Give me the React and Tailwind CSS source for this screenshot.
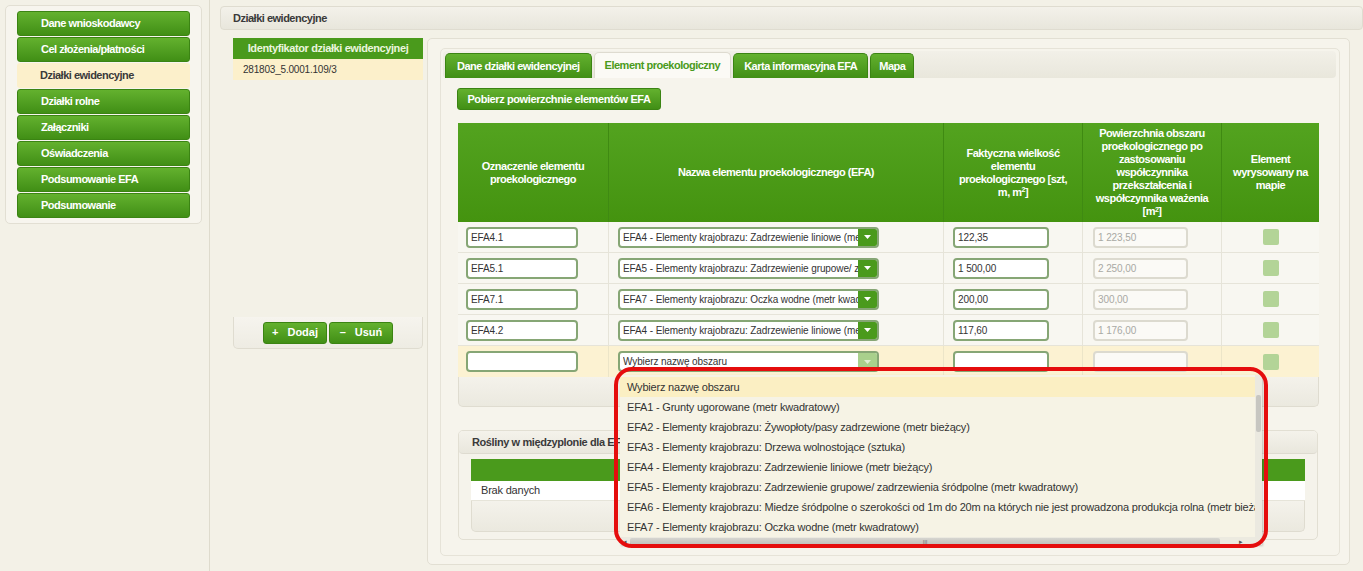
import React from 'react'

const menu = [
  'Dane wnioskodawcy',
  'Cel złożenia/płatności',
  'Działki ewidencyjne',
  'Działki rolne',
  'Załączniki',
  'Oświadczenia',
  'Podsumowanie EFA',
  'Podsumowanie',
]

const rows = [
  { id: 'EFA4.1', name: 'EFA4 - Elementy krajobrazu: Zadrzewienie liniowe (metr bieżący)', size: '122,35', area: '1 223,50' },
  { id: 'EFA5.1', name: 'EFA5 - Elementy krajobrazu: Zadrzewienie grupowe/ zadrzewienia śródpolne (metr kwadratowy)', size: '1 500,00', area: '2 250,00' },
  { id: 'EFA7.1', name: 'EFA7 - Elementy krajobrazu: Oczka wodne (metr kwadratowy)', size: '200,00', area: '300,00' },
  { id: 'EFA4.2', name: 'EFA4 - Elementy krajobrazu: Zadrzewienie liniowe (metr bieżący)', size: '117,60', area: '1 176,00' },
]

const options = [
  'Wybierz nazwę obszaru',
  'EFA1 - Grunty ugorowane (metr kwadratowy)',
  'EFA2 - Elementy krajobrazu: Żywopłoty/pasy zadrzewione (metr bieżący)',
  'EFA3 - Elementy krajobrazu: Drzewa wolnostojące (sztuka)',
  'EFA4 - Elementy krajobrazu: Zadrzewienie liniowe (metr bieżący)',
  'EFA5 - Elementy krajobrazu: Zadrzewienie grupowe/ zadrzewienia śródpolne (metr kwadratowy)',
  'EFA6 - Elementy krajobrazu: Miedze śródpolne o szerokości od 1m do 20m na których nie jest prowadzona produkcja rolna (metr bieżący)',
  'EFA7 - Elementy krajobrazu: Oczka wodne (metr kwadratowy)',
]

const green = 'bg-linear-to-b from-[#63b12e] to-[#418f15] border border-[#3b8413] text-white font-bold'
const cols = 'grid grid-cols-[151px_335px_139px_139px_97px]'

function Caret({ light }) {
  return (
    <svg width="7" height="4" viewBox="0 0 7 4">
      <path d="M0 0h7L3.5 4z" fill={light ? '#dfeed3' : '#fff'} />
    </svg>
  )
}

function Select({ value, light, open }) {
  return (
    <div className="relative ml-[9px] w-[261px] h-[21px]">
      <div className="flex h-full rounded-[4px] border-2 border-[#86a675] bg-white overflow-hidden">
        <div className="flex-1 min-w-0 pl-[3px] flex items-center whitespace-nowrap overflow-hidden text-[#333] text-[10px] tracking-[-0.1px]">
          <span className="block overflow-hidden">{value}</span>
        </div>
        <div className={`w-[19px] shrink-0 flex items-center justify-center ${light ? 'bg-[#a9d08c]' : 'bg-[#4a9a1c]'}`}>
          <Caret light={light} />
        </div>
      </div>
      {open && (
        <div className="absolute left-[2px] top-[24px] w-[642px] h-[170px] z-10">
          <div className="absolute -left-[6px] -top-[8px] -right-[6px] -bottom-[3px] rounded-[18px] border-4 border-[#e50d0d] pointer-events-none z-20" />
          <div className="relative h-full bg-[#f6f3e5] shadow-[1px_1px_2px_rgba(0,0,0,0.2)] flex">
            <div className="flex-1 min-w-0 flex flex-col overflow-hidden pt-[2px]">
              {options.map((o, i) => (
                <div key={o} className={`h-[20px] shrink-0 pl-[7px] flex items-center whitespace-nowrap text-[#333] tracking-[-0.2px] ${i === 0 ? 'bg-[#fbefc3]' : ''}`}>{o}</div>
              ))}
              <div className="mt-auto h-[10px] shrink-0 flex items-center bg-[#eceae0]">
                <span className="w-[10px] text-[7px] text-[#555] text-center">◂</span>
                <div className="w-[590px] h-[8px] rounded-[2px] bg-linear-to-b from-[#d6d5d0] to-[#bdbcb6] flex items-center justify-center text-[6px] text-[#777] leading-none">III</div>
                <span className="ml-auto w-[28px] text-[7px] text-[#555] text-center">▸</span>
              </div>
            </div>
            <div className="w-[7px] bg-[#ebe9e0] flex flex-col items-center pt-[20px]">
              <div className="w-[5px] h-[37px] rounded-[2px] bg-[#c7c6c1]" />
            </div>
          </div>
        </div>
      )}
    </div>
  )
}

function Input({ value, w, ml, disabled }) {
  return (
    <div
      className={`h-[21px] rounded-[4px] border-2 flex items-center pl-[3px] text-[10px] ${disabled ? 'border-[#dcdacf] bg-[#fbfaf6] text-[#a9a9a4]' : 'border-[#86a675] bg-white text-[#333]'} ${w} ${ml}`}
    >
      {value}
    </div>
  )
}

export default function App() {
  return (
    <div className="w-[1363px] h-[571px] overflow-hidden flex bg-[#f3f1e7] text-[11px] text-[#333] font-['Liberation_Sans',Arial,sans-serif]">
      {/* left menu */}
      <div className="w-[210px] shrink-0 border-r border-[#dedbcd] pl-[5px] pt-[5px]">
        <div className="w-[197px] h-[219px] rounded-[5px] border border-[#e2dfd3] bg-[#f7f5ee] pl-[11px] pt-[5px] flex flex-col gap-px">
          {menu.map((m, i) => (
            <div
              key={m}
              className={`w-[173px] h-[25px] rounded-[3px] pl-[23px] flex items-center tracking-[-0.5px] ${i === 2 ? 'bg-[#fcf0cb] text-[#3a3a3a] font-bold' : green}`}
            >
              {m}
            </div>
          ))}
        </div>
      </div>

      {/* main */}
      <div className="flex-1 pl-[10px] pt-[6px] flex flex-col">
        <div className="h-[24px] rounded-[4px] border border-[#dfdcd0] bg-linear-to-b from-[#f3f1ea] to-[#e8e6dc] pl-[12px] flex items-center font-bold text-[#3a3a3a] tracking-[-0.5px]">
          Działki ewidencyjne
        </div>

        <div className="flex mt-[8px] flex-1">
          {/* identifier column */}
          <div className="w-[207px] shrink-0 pl-[13px] flex flex-col">
            <div className="w-[190px]">
              <div className="h-[21px] bg-[#4a9a1c] text-[#eaf5df] font-bold flex items-center justify-center tracking-[-0.4px]">
                Identyfikator działki ewidencyjnej
              </div>
              <div className="h-[21px] bg-[#fcf0cb] pl-[10px] flex items-center text-[10px] tracking-[-0.2px]">281803_5.0001.109/3</div>
            </div>
            <div className="mt-[237px] w-[190px] h-[32px] rounded-b-[5px] border border-t-0 border-[#dfdcd0] bg-linear-to-b from-[#f6f4ee] to-[#eeece3] flex items-center justify-center gap-[2px]">
              <div className={`${green} w-[64px] h-[22px] rounded-[3px] flex items-center justify-center gap-[9px]`}>
                <span>+</span>
                <span>Dodaj</span>
              </div>
              <div className={`${green} w-[64px] h-[22px] rounded-[3px] flex items-center justify-center gap-[9px]`}>
                <span>–</span>
                <span>Usuń</span>
              </div>
            </div>
          </div>

          {/* right panel */}
          <div className="w-[923px] h-[527px] shrink-0 rounded-[5px] border border-[#e2dfd3] bg-[#f6f4ec] pl-[12px] pt-[9px]">
            <div className="w-[900px] h-[508px] rounded-[5px] border border-[#e6e3d8] bg-[#f6f4ec] p-[2px]">
              {/* tabs */}
              <div className="w-[893px] h-[27px] rounded-[4px] bg-linear-to-b from-[#f2f0e8] to-[#e9e7dc] flex items-end pl-[2px] gap-[2px] tracking-[-0.5px]">
                <div className={`${green} h-[25px] px-[11px] rounded-t-[5px] border-b-0 flex items-center`}>Dane działki ewidencyjnej</div>
                <div className="h-[26px] px-[10px] rounded-t-[5px] border border-b-0 border-[#dedbd0] bg-[#fbfaf5] text-[#4a9a1c] font-bold flex items-center">Element proekologiczny</div>
                <div className={`${green} h-[25px] px-[10px] rounded-t-[5px] border-b-0 flex items-center`}>Karta informacyjna EFA</div>
                <div className={`${green} h-[25px] px-[8px] rounded-t-[5px] border-b-0 flex items-center`}>Mapa</div>
              </div>

              <div className="pl-[14px]">
                <div className={`${green} mt-[10px] w-[204px] h-[22px] rounded-[3px] flex items-center justify-center tracking-[-0.4px]`}>
                  Pobierz powierzchnie elementów EFA
                </div>

                {/* table */}
                <div className="mt-[13px] ml-px w-[861px]">
                  <div className={`${cols} h-[99px] bg-linear-to-b from-[#53a31f] to-[#44930f] text-white font-bold text-center leading-[13px] tracking-[-0.5px]`}>
                    <div className="flex items-center justify-center border-r border-[#3f8a12] px-2">Oznaczenie elementu proekologicznego</div>
                    <div className="flex items-center justify-center border-r border-[#3f8a12]">Nazwa elementu proekologicznego (EFA)</div>
                    <div className="flex flex-col items-center justify-center border-r border-[#3f8a12] whitespace-nowrap">
                      <span>Faktyczna wielkość</span>
                      <span>elementu</span>
                      <span>proekologicznego [szt,</span>
                      <span>m, m<sup className="text-[7px]">2</sup>]</span>
                    </div>
                    <div className="flex flex-col items-center justify-center border-r border-[#3f8a12] whitespace-nowrap">
                      <span>Powierzchnia obszaru</span>
                      <span>proekologicznego po</span>
                      <span>zastosowaniu</span>
                      <span>współczynnika</span>
                      <span>przekształcenia i</span>
                      <span>współczynnika ważenia</span>
                      <span>[m<sup className="text-[7px]">2</sup>]</span>
                    </div>
                    <div className="flex flex-col items-center justify-center whitespace-nowrap">
                      <span>Element</span>
                      <span>wyrysowany na</span>
                      <span>mapie</span>
                    </div>
                  </div>

                  {rows.map((r) => (
                    <div key={r.id} className={`${cols} h-[31px] bg-[#f8f7f1] border-b border-[#e6e4d9] tracking-[-0.1px]`}>
                      <div className="flex items-center border-r border-[#e6e4d9]">
                        <Input value={r.id} w="w-[112px]" ml="ml-[8px]" />
                      </div>
                      <div className="flex items-center border-r border-[#e6e4d9] min-w-0">
                        <Select value={r.name} />
                      </div>
                      <div className="flex items-center border-r border-[#e6e4d9]">
                        <Input value={r.size} w="w-[96px]" ml="ml-[9px]" />
                      </div>
                      <div className="flex items-center border-r border-[#e6e4d9]">
                        <Input value={r.area} w="w-[95px]" ml="ml-[10px]" disabled />
                      </div>
                      <div className="flex items-center justify-center">
                        <div className="w-[16px] h-[16px] rounded-[2px] bg-[#b3d497]" />
                      </div>
                    </div>
                  ))}

                  <div className={`${cols} h-[31px] bg-[#fcf2d2] tracking-[-0.1px]`}>
                    <div className="flex items-center border-r border-[#ece5c8]">
                      <Input value="" w="w-[112px]" ml="ml-[8px]" />
                    </div>
                    <div className="flex items-center border-r border-[#ece5c8]">
                      <Select value="Wybierz nazwę obszaru" light open />
                    </div>
                    <div className="flex items-center border-r border-[#ece5c8]">
                      <Input value="" w="w-[96px]" ml="ml-[9px]" />
                    </div>
                    <div className="flex items-center border-r border-[#ece5c8]">
                      <Input value="" w="w-[95px]" ml="ml-[10px]" disabled />
                    </div>
                    <div className="flex items-center justify-center">
                      <div className="w-[16px] h-[16px] rounded-[2px] bg-[#b3d497]" />
                    </div>
                  </div>
                  <div className="h-[30px] rounded-b-[5px] border border-t-0 border-[#dfdcd0] bg-linear-to-b from-[#f4f2eb] to-[#ebe9df]" />
                </div>

                {/* rośliny */}
                <div className="mt-[23px] ml-px w-[860px] h-[110px] rounded-[5px] border border-[#e2dfd3] bg-[#f5f3eb]">
                  <div className="h-[23px] rounded-[4px] border-b border-[#dedbd0] bg-linear-to-b from-[#f4f2eb] to-[#e9e7dd] pl-[13px] flex items-center font-bold text-[#3a3a3a] tracking-[-0.4px]">
                    Rośliny w międzyplonie dla EFA
                  </div>
                  <div className="mx-[12px] mt-[5px]">
                    <div className="h-[22px] bg-[#4a9a1c]" />
                    <div className="h-[20px] bg-white pl-[10px] flex items-center border-b border-[#e6e4d9] tracking-[-0.2px]">Brak danych</div>
                    <div className="h-[31px] rounded-b-[5px] border border-t-0 border-[#dfdcd0] bg-linear-to-b from-[#f4f2eb] to-[#ebe9df]" />
                  </div>
                </div>
              </div>
            </div>
          </div>
        </div>
      </div>
    </div>
  )
}
